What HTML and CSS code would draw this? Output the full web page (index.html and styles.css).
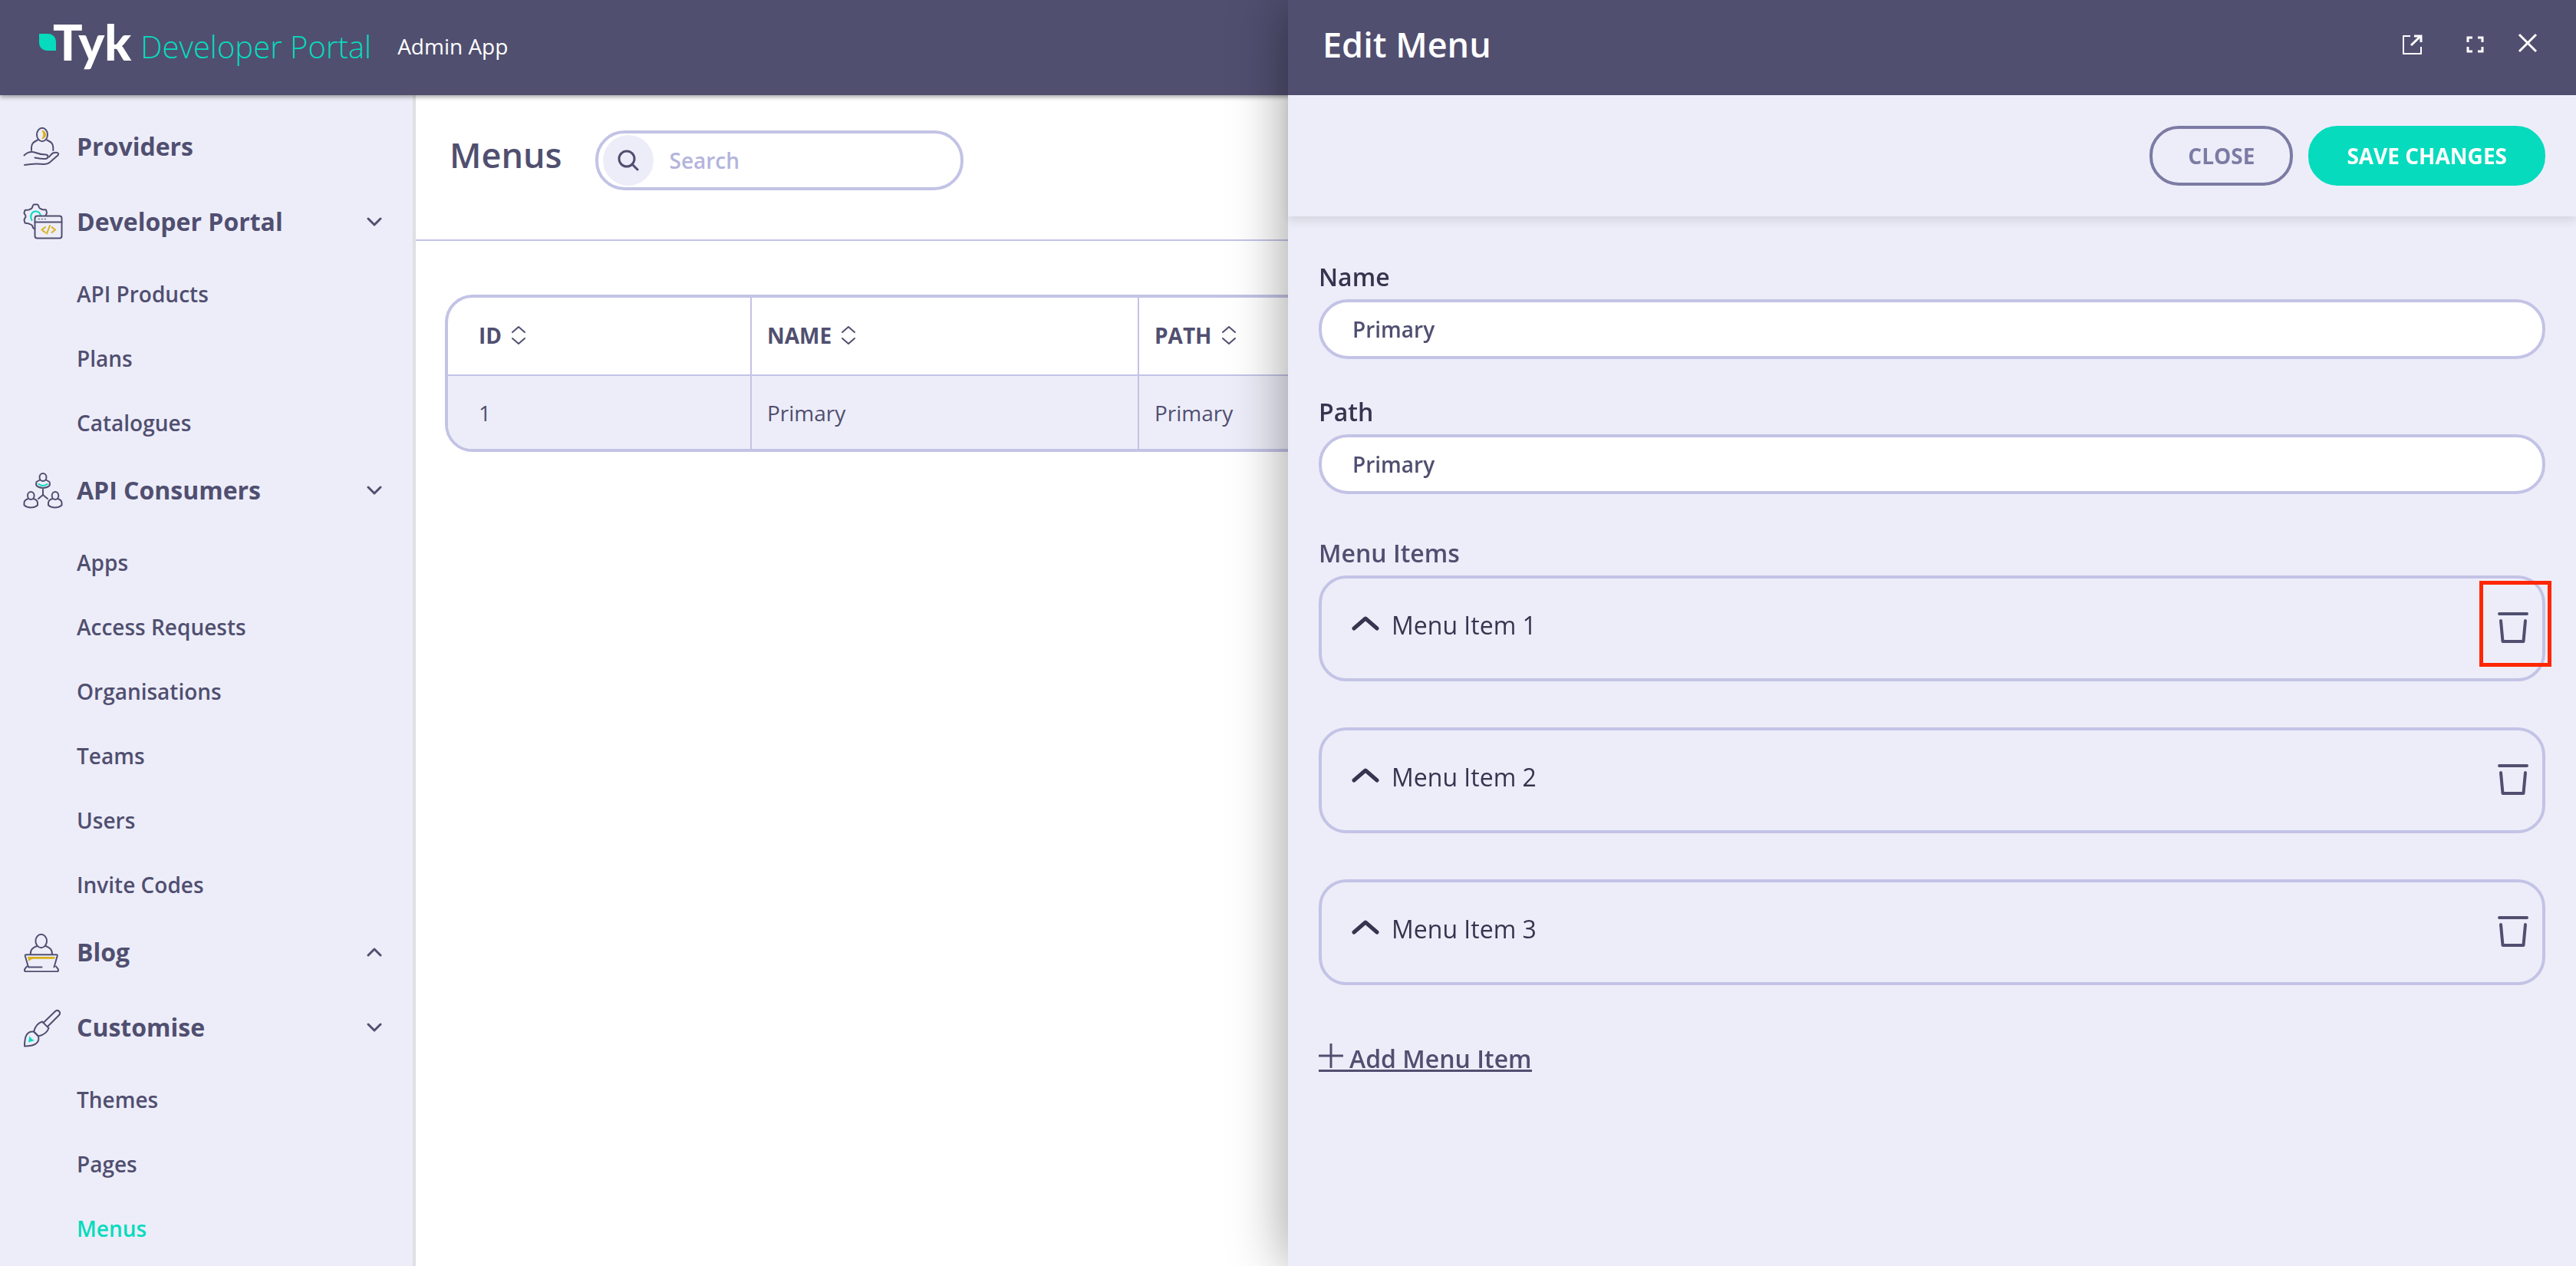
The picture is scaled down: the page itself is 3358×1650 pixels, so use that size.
FILE: index.html
```html
<!DOCTYPE html>
<html lang="en">
<head>
  <meta charset="UTF-8">
  <meta name="viewport" content="width=device-width, initial-scale=1.0">
  <title>Tyk Developer Portal - Menus</title>
  <link rel="stylesheet" href="styles.css">
</head>
<body>
  <header class="topbar">
    <a href="#" class="logo">
      <svg class="logo-leaf" viewBox="0 0 22 22" aria-hidden="true"><path d="M0 0h12a10 10 0 0 1 10 10v12H10A10 10 0 0 1 0 12z"/></svg>
      <span class="logo-name">Tyk</span>
      <span class="logo-product">Developer Portal</span>
    </a>
    <span class="app-name">Admin App</span>
  </header>

  <div class="layout">
    <nav class="sidebar">
      <a href="#" class="nav-group">
        <svg class="nav-icon" viewBox="0 0 52 52" aria-hidden="true">
          <path class="gold" d="M24 4.500c8 1 8 11 0 12c3-4 3-8 0-12z"/>
          <ellipse cx="25" cy="10.500" rx="7" ry="8.800"/>
          <path d="M11 31v-4c0-5 3-7 8-9.500M39.300 31v-4c0-5-3-7-8-9.500"/>
          <path d="M1.500 37.500c4-4 9-5.500 15-3.500c5 2 8 2.500 13 2.500c4 0 4 5 0 5.500c-5 .5-9-.5-14-1.500"/>
          <path d="M34 39.500c2-2 3-4 5-5c3-1 6-1 7 .5c1 1-1 3-3 4.500l-8 7c-3 2.500-5 2.500-8 2.500c-8-1-17-.5-25 1"/>
        </svg>
        <span class="nav-label">Providers</span>
      </a>

      <button type="button" class="nav-group">
        <svg class="nav-icon" viewBox="0 0 52 52" aria-hidden="true">
          <path d="M29.500 18.500c0-2 2-3 1.500-4.500l-1-3.500c-1-1-3 .5-5-.5s-3.500-1-4-2.500c-.5-2-1.500-4-2.500-4h-4c-1.500 0-2 2-2.500 4s-3 2-4.500 3s-4-.5-5 .5l-1 3.500c0 1.500 2 2.500 2 4.500s-2 3-2 4.500l1 4c1 1 3.500 0 5 1s4 1 4.500 2.500c.5 2 1 3.500 2.500 4"/>
          <path class="teal-line" d="M11.500 24c-3-6 0-11.500 5-11.500c3.500 0 6 2.500 6.500 6"/>
          <rect class="nav-fill" x="15.500" y="18.500" width="35" height="29" rx="3"/>
          <path d="M15.500 26.500h35"/>
          <path class="dots" d="M20 22.500h1.500M24 22.500h1.500M28 22.500h1.500"/>
          <path class="gold-line" d="M29 33l-4.500 3.500l4.500 3.500M37.500 33l4.500 3.500l-4.500 3.500M35 31l-4 10.500"/>
        </svg>
        <span class="nav-label">Developer Portal</span>
        <svg class="chevron" viewBox="0 0 20 12" aria-hidden="true"><path d="M2 2l8 8l8-8"/></svg>
      </button>
      <ul class="nav-list">
        <li><a href="#">API Products</a></li>
        <li><a href="#">Plans</a></li>
        <li><a href="#">Catalogues</a></li>
      </ul>

      <button type="button" class="nav-group">
        <svg class="nav-icon" viewBox="0 0 52 52" aria-hidden="true">
          <ellipse cx="26" cy="9" rx="4.500" ry="5"/>
          <path d="M22 12.500l-4.500 2.500c-.7 2-.7 3 0 5c5 4 12 4 17 0c.7-2 .7-3 0-5l-4.500-2.500"/>
          <path class="teal-line" d="M20.500 18c3 2.500 8 2.500 11 0"/>
          <path d="M26 25v7l-6 5M26 32l6 5"/>
          <ellipse cx="10.300" cy="33" rx="4.300" ry="5"/>
          <path d="M7 37c-4 1-5.500 3-5.500 5.500v3c5 4 12.500 4 17.500 0v-3c0-2.500-1.500-4.500-5.500-5.500"/>
          <ellipse cx="42" cy="33" rx="4.300" ry="5"/>
          <path d="M38.500 37c-4 1-5.500 3-5.500 5.500v3c5 4 12.500 4 17.500 0v-3c0-2.500-1.500-4.500-5.500-5.500"/>
        </svg>
        <span class="nav-label">API Consumers</span>
        <svg class="chevron" viewBox="0 0 20 12" aria-hidden="true"><path d="M2 2l8 8l8-8"/></svg>
      </button>
      <ul class="nav-list">
        <li><a href="#">Apps</a></li>
        <li><a href="#">Access Requests</a></li>
        <li><a href="#">Organisations</a></li>
        <li><a href="#">Teams</a></li>
        <li><a href="#">Users</a></li>
        <li><a href="#">Invite Codes</a></li>
      </ul>

      <button type="button" class="nav-group">
        <svg class="nav-icon" viewBox="0 0 52 52" aria-hidden="true">
          <ellipse cx="23.700" cy="11.500" rx="7.300" ry="8.700"/>
          <path d="M9.700 29c0-6 2-8.500 8.500-11M38 29c0-6-2-8.500-8.500-11"/>
          <path class="gold" d="M6 32h35.500v2.700H14c-3 0-4 1-6.500 3.300z"/>
          <path d="M24.500 45.500H7L2.800 31c-.3-1.200.2-1.700 1.200-1.700h39.500c1 0 1.500.5 1.200 1.700l-4.200 14.500"/>
          <path d="M5 44.500c-1.500 2-3 3-3 5c0 1 .5 1.800 1.500 1.800h41c1 0 1.500-.8 1.500-1.800c0-2-1.500-3-3-5"/>
        </svg>
        <span class="nav-label">Blog</span>
        <svg class="chevron" viewBox="0 0 20 12" aria-hidden="true"><path d="M2 10l8-8l8 8"/></svg>
      </button>

      <button type="button" class="nav-group">
        <svg class="nav-icon" viewBox="0 0 52 52" aria-hidden="true">
          <path d="M26.500 20l15-14.500c2-2 4-2 5.500-.5s1.500 3.500 0 5L32.500 24.500"/>
          <path d="M25 18.500l8.500 8.500c-2 6-7 9-13.500 10.500l-6-6c1.500-6 5-11 11-13z"/>
          <path d="M14 31.500c-9-1-12 6-12 19c13 0 20-4 18-13z"/>
          <path class="teal" d="M8.500 37l-1.500 8.500l8-2.500c-3-1-5-3-6.500-6z"/>
        </svg>
        <span class="nav-label">Customise</span>
        <svg class="chevron" viewBox="0 0 20 12" aria-hidden="true"><path d="M2 2l8 8l8-8"/></svg>
      </button>
      <ul class="nav-list">
        <li><a href="#">Themes</a></li>
        <li><a href="#">Pages</a></li>
        <li><a href="#" class="active">Menus</a></li>
      </ul>
    </nav>

    <main class="content">
      <div class="page-header">
        <h1 class="title">Menus</h1>
        <div class="search">
          <button type="button" class="search-btn" aria-label="Search">
            <svg viewBox="0 0 28 28" aria-hidden="true"><circle cx="12" cy="12" r="10"/><path d="M19 19l7 7"/></svg>
          </button>
          <input type="text" class="search-input" placeholder="Search" aria-label="Search menus">
        </div>
      </div>

      <div class="table-wrap">
        <table class="table">
          <thead>
            <tr>
              <th class="col-id"><button type="button" class="sort">ID <svg viewBox="0 0 20 26" aria-hidden="true"><path d="M2 9l8-7l8 7M2 17l8 7l8-7"/></svg></button></th>
              <th class="col-name"><button type="button" class="sort">NAME <svg viewBox="0 0 20 26" aria-hidden="true"><path d="M2 9l8-7l8 7M2 17l8 7l8-7"/></svg></button></th>
              <th><button type="button" class="sort">PATH <svg viewBox="0 0 20 26" aria-hidden="true"><path d="M2 9l8-7l8 7M2 17l8 7l8-7"/></svg></button></th>
            </tr>
          </thead>
          <tbody>
            <tr>
              <td>1</td>
              <td>Primary</td>
              <td>Primary</td>
            </tr>
          </tbody>
        </table>
      </div>
    </main>
  </div>

  <aside class="drawer">
    <div class="drawer-header">
      <h2 class="title">Edit Menu</h2>
      <div class="drawer-tools">
        <button type="button" class="tool" aria-label="Open in new tab">
          <svg viewBox="0 0 26 26" aria-hidden="true"><path d="M10 2H1v23h23v-9"/><path class="thick" d="M11 14L23 2.500M15 2h9v8"/></svg>
        </button>
        <button type="button" class="tool" aria-label="Full screen">
          <svg viewBox="0 0 26 26" aria-hidden="true"><path class="mid" d="M3 10V4h6M16 4h6v6M22 16v6h-6M9 22H3v-6"/></svg>
        </button>
        <button type="button" class="tool tool-close" aria-label="Close panel">
          <svg viewBox="0 0 26 26" aria-hidden="true"><path class="thick" d="M2 2l22 22M24 2L2 24"/></svg>
        </button>
      </div>
    </div>

    <div class="drawer-actions">
      <button type="button" class="btn">CLOSE</button>
      <button type="submit" form="menu-form" class="btn btn-primary">SAVE CHANGES</button>
    </div>

    <form id="menu-form" class="drawer-body">
      <div class="field">
        <label for="menu-name">Name</label>
        <input type="text" id="menu-name" value="Primary">
      </div>
      <div class="field">
        <label for="menu-path">Path</label>
        <input type="text" id="menu-path" value="Primary">
      </div>

      <h3 class="section-title">Menu Items</h3>
      <div class="menu-items">
        <div class="menu-item">
          <button type="button" class="menu-toggle"><svg viewBox="0 0 36 20" aria-hidden="true"><path d="M3 17L18 4l15 13"/></svg>Menu Item 1</button>
          <button type="button" class="trash" aria-label="Delete Menu Item 1">
            <svg viewBox="0 0 40 40" aria-hidden="true"><path d="M2 2h36M4 11l2.500 27h27L36 11"/></svg>
          </button>
          <span class="highlight"></span>
        </div>
        <div class="menu-item">
          <button type="button" class="menu-toggle"><svg viewBox="0 0 36 20" aria-hidden="true"><path d="M3 17L18 4l15 13"/></svg>Menu Item 2</button>
          <button type="button" class="trash" aria-label="Delete Menu Item 2">
            <svg viewBox="0 0 40 40" aria-hidden="true"><path d="M2 2h36M4 11l2.500 27h27L36 11"/></svg>
          </button>
        </div>
        <div class="menu-item">
          <button type="button" class="menu-toggle"><svg viewBox="0 0 36 20" aria-hidden="true"><path d="M3 17L18 4l15 13"/></svg>Menu Item 3</button>
          <button type="button" class="trash" aria-label="Delete Menu Item 3">
            <svg viewBox="0 0 40 40" aria-hidden="true"><path d="M2 2h36M4 11l2.500 27h27L36 11"/></svg>
          </button>
        </div>
      </div>

      <a href="#" class="add-item">
        <svg viewBox="0 0 32 32" aria-hidden="true"><path d="M16 1v30M1 16h30"/></svg>
        <span>Add Menu Item</span>
      </a>
    </form>
  </aside>
</body>
</html>
```

FILE: styles.css
```css
* {
  box-sizing: border-box;
}

body {
  margin: 0;
  height: 100vh;
  display: flex;
  flex-direction: column;
  overflow: hidden;
  font-family: "Open Sans", "Noto Sans", sans-serif;
  font-size: 28px;
  color: #504f70;
  background-color: #fff;
}

button,
input {
  font: inherit;
  color: inherit;
}

button {
  padding: 0;
  border: none;
  background: none;
  cursor: pointer;
}

a {
  color: inherit;
  text-decoration: none;
}

svg {
  flex: none;
  fill: none;
  stroke: currentColor;
  stroke-linecap: round;
  stroke-linejoin: round;
}

.title {
  margin: 0;
  font-size: 45px;
  font-weight: 600;
  line-height: 64px;
}

/* Top bar */
.topbar {
  position: relative;
  z-index: 1;
  flex: none;
  display: flex;
  align-items: center;
  gap: 34px;
  height: 124px;
  padding: 0 51px 4px;
  background-color: #504f70;
  color: #fff;
  box-shadow: 0 2px 6px rgba(0, 0, 0, 0.4);
}

.logo {
  display: flex;
  align-items: center;
}

.logo-leaf {
  width: 22px;
  height: 22px;
  margin-bottom: 10px;
  fill: #06dbbd;
  stroke: none;
}

.logo-name {
  margin: -10px 12px 0 -4px;
  font-family: Lato, sans-serif;
  font-size: 64px;
  font-weight: 900;
  line-height: 80px;
}

.logo-product {
  font-size: 40px;
  font-weight: 300;
  color: #06dbbd;
}

.app-name {
  font-weight: 500;
}

/* Sidebar */
.layout {
  flex: 1;
  min-height: 0;
  display: flex;
}

.sidebar {
  flex: none;
  width: 542px;
  padding-top: 18px;
  overflow: hidden;
  background-color: #ededf9;
  border-right: 4px solid #e0e0e3;
}

.nav-group {
  display: flex;
  align-items: center;
  gap: 18px;
  width: 100%;
  height: 98px;
  padding: 0 40px 0 30px;
  font-size: 32px;
  font-weight: 700;
  text-align: left;
}

.nav-icon {
  width: 52px;
  height: 52px;
  stroke-width: 2;
}

.nav-label {
  flex: 1;
  padding-bottom: 2px;
}

.nav-fill {
  fill: #ededf9;
}

.dots {
  stroke-width: 1;
}

.gold {
  fill: #d8b01c;
  stroke: none;
}

.gold-line {
  stroke: #d8b01c;
}

.teal {
  fill: #06dbbd;
  stroke: none;
}

.teal-line {
  stroke: #06dbbd;
}

.chevron {
  width: 20px;
  height: 12px;
  stroke-width: 3;
}

.nav-list {
  margin: 0;
  padding: 0;
  list-style: none;
}

.nav-list a {
  display: block;
  padding: 25px 40px 19px 100px;
  font-weight: 600;
  line-height: 40px;
}

.nav-list .active {
  color: #06dbbd;
}

/* Content */
.content {
  flex: 1;
  min-width: 0;
}

.page-header {
  display: flex;
  align-items: flex-start;
  gap: 44px;
  padding: 46px 40px 64px 44px;
  border-bottom: 2px solid #c3c3e6;
}

.search {
  display: flex;
  align-items: center;
  gap: 20px;
  width: 480px;
  height: 78px;
  padding: 0 40px 0 6px;
  border: 4px solid #c3c3e6;
  border-radius: 38px;
}

.search-btn {
  flex: none;
  display: flex;
  align-items: center;
  justify-content: center;
  width: 66px;
  height: 66px;
  border-radius: 50%;
  background-color: #ededf9;
}

.search-btn svg {
  width: 28px;
  height: 28px;
  stroke-width: 3;
}

.search-input {
  flex: 1;
  min-width: 0;
  padding: 0;
  border: none;
  outline: none;
  background: none;
  font-weight: 600;
}

.search-input::placeholder {
  color: #b4b4dc;
}

.table-wrap {
  margin: 70px 40px 0 38px;
  border: 4px solid #c3c3e6;
  border-radius: 36px;
  overflow: hidden;
}

.table {
  width: 100%;
  table-layout: fixed;
  border-spacing: 0;
}

.table th,
.table td {
  padding: 0 20px;
  border-left: 2px solid #c3c3e6;
  text-align: left;
}

.table th {
  height: 102px;
  padding-bottom: 2px;
  border-bottom: 2px solid #c3c3e6;
}

.table td {
  height: 95px;
  background-color: #ededf9;
}

.table th:first-child,
.table td:first-child {
  padding-left: 40px;
  border-left: none;
}

.col-id {
  width: 394px;
}

.col-name {
  width: 505px;
}

.sort {
  display: flex;
  align-items: center;
  gap: 12px;
  font-weight: 700;
}

.sort svg {
  width: 20px;
  height: 26px;
  stroke-width: 2;
}

/* Edit drawer */
.drawer {
  position: fixed;
  z-index: 2;
  top: 0;
  right: 0;
  bottom: 0;
  width: 50%;
  background-color: #ededf9;
  box-shadow: 0 0 70px rgba(0, 0, 0, 0.4);
}

.drawer-header {
  display: flex;
  align-items: center;
  justify-content: space-between;
  height: 124px;
  padding: 0 50px 8px 45px;
  background-color: #504f70;
  color: #fff;
}

.drawer-tools {
  display: flex;
  align-items: center;
  gap: 56px;
}

.tool {
  display: flex;
}

.tool svg {
  width: 26px;
  height: 26px;
  stroke-width: 2;
  stroke-linecap: butt;
  stroke-linejoin: miter;
}

.tool .mid,
.tool .thick {
  stroke-width: 3;
}

.tool-close {
  margin-left: -14px;
  padding-bottom: 4px;
}

.drawer-actions {
  display: flex;
  justify-content: flex-end;
  gap: 20px;
  padding: 40px;
  box-shadow: 0 6px 12px rgba(0, 0, 0, 0.1);
}

.btn {
  height: 78px;
  padding: 0 46px;
  border: 4px solid #7c7ba4;
  border-radius: 38px;
  color: #7c7ba4;
  font-weight: 700;
}

.btn-primary {
  border-color: #06dbbd;
  background-color: #06dbbd;
  color: #fff;
}

.drawer-body {
  padding: 57px 40px;
}

.field {
  display: flex;
  flex-direction: column;
  gap: 7px;
  margin-bottom: 47px;
}

.field label {
  font-size: 32px;
  font-weight: 600;
  line-height: 44px;
  color: #36344e;
}

.field input {
  width: 100%;
  height: 78px;
  padding: 0 40px;
  border: 4px solid #c3c3e6;
  border-radius: 38px;
  background-color: #fff;
  font-weight: 600;
}

.section-title {
  margin: 55px 0 7px;
  font-size: 32px;
  font-weight: 600;
  line-height: 44px;
}

.menu-items {
  display: flex;
  flex-direction: column;
  gap: 60px;
}

.menu-item {
  position: relative;
  display: flex;
  align-items: center;
  justify-content: space-between;
  height: 138px;
  padding: 0 18px 2px 39px;
  border: 4px solid #c3c3e6;
  border-radius: 36px;
}

.menu-toggle {
  display: flex;
  align-items: center;
  gap: 16px;
  padding-bottom: 8px;
  font-size: 32px;
  font-weight: 500;
  color: #36344e;
}

.menu-toggle svg {
  width: 36px;
  height: 20px;
  margin-bottom: 4px;
  stroke-width: 5;
}

.trash {
  display: flex;
}

.trash svg {
  width: 40px;
  height: 40px;
  stroke-width: 4;
}

/* Red marker round the delete button */
.highlight {
  position: absolute;
  top: 3px;
  right: -12px;
  width: 94px;
  height: 112px;
  border: 5px solid #ff2600;
  pointer-events: none;
}

.add-item {
  display: inline-flex;
  align-items: flex-end;
  gap: 8px;
  margin-top: 76px;
  padding-bottom: 2px;
  border-bottom: 3px solid #504f70;
  font-size: 32px;
  font-weight: 600;
  line-height: 24px;
}

.add-item svg {
  width: 32px;
  height: 32px;
  stroke-width: 3;
}
```
